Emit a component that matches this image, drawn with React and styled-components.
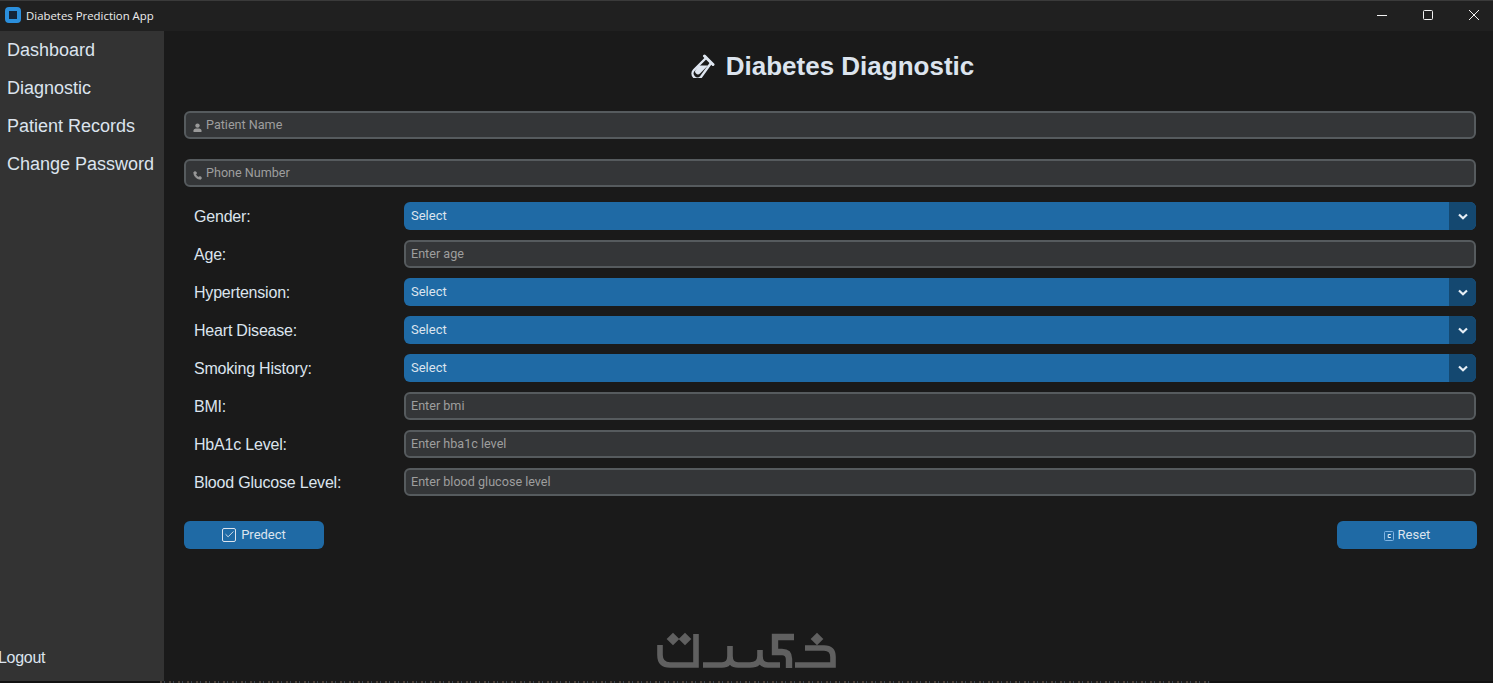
import React from 'react'
import styled, { createGlobalStyle } from 'styled-components'
import { Phone, Check } from 'lucide-react'

const GlobalStyle = createGlobalStyle`
	html, body {
		margin: 0;
		padding: 0;
		height: 100%;
		background: #1a1a1a;
		overflow: hidden;
	}
	* {
		box-sizing: border-box;
	}
`

const navItems = ['Dashboard', 'Diagnostic', 'Patient Records', 'Change Password']

const rows = [
	{ label: 'Gender:', type: 'select', text: 'Select' },
	{ label: 'Age:', type: 'input', text: 'Enter age' },
	{ label: 'Hypertension:', type: 'select', text: 'Select' },
	{ label: 'Heart Disease:', type: 'select', text: 'Select' },
	{ label: 'Smoking History:', type: 'select', text: 'Select' },
	{ label: 'BMI:', type: 'input', text: 'Enter bmi' },
	{ label: 'HbA1c Level:', type: 'input', text: 'Enter hba1c level' },
	{ label: 'Blood Glucose Level:', type: 'input', text: 'Enter blood glucose level' },
]

const App = () => {
	return (
		<Window>
			<GlobalStyle />
			<TitleBar>
				<AppIcon />
				<AppName>Diabetes Prediction App</AppName>
				<WindowControls>
					<svg width="14" height="14" viewBox="0 0 14 14">
						<path d="M2 7.5h10" stroke="#f2f2f2" strokeWidth="1" />
					</svg>
					<svg width="14" height="14" viewBox="0 0 14 14">
						<rect x="2.5" y="2.5" width="9" height="9" rx="1" fill="none" stroke="#f2f2f2" strokeWidth="1" />
					</svg>
					<svg width="14" height="14" viewBox="0 0 14 14">
						<path d="M2 2l10 10M12 2L2 12" stroke="#f2f2f2" strokeWidth="1" />
					</svg>
				</WindowControls>
			</TitleBar>
			<Body>
				<Sidebar>
					<Nav>
						{navItems.map((item) => (
							<NavItem key={item}>{item}</NavItem>
						))}
					</Nav>
					<Logout>Logout</Logout>
				</Sidebar>
				<Main>
					<Heading>
						<svg width="24" height="24" viewBox="0 0 24 24" fill="none">
							<path d="M13.5 2L22 10.5" stroke="#dfe6f0" strokeWidth="3" strokeLinecap="round" />
							<path d="M15 4L3 16a4.9 4.9 0 0 0 7 7L20 9" stroke="#dfe6f0" strokeWidth="2.4" />
							<path d="M7.5 11.5h9.5L9 19.5a2.6 2.6 0 0 1-4-4z" fill="#dfe6f0" />
						</svg>
						Diabetes Diagnostic
					</Heading>
					<TopField>
						<svg width="9" height="9" viewBox="0 0 9 9">
							<circle cx="4.5" cy="2.6" r="2.2" fill="#9a9a9a" />
							<path d="M0.5 9V7.4Q0.5 6 2.6 5.4h3.8Q8.5 6 8.5 7.4V9z" fill="#9a9a9a" />
						</svg>
						<span>Patient Name</span>
					</TopField>
					<TopField>
						<Phone size={9} fill="#9a9a9a" strokeWidth={2} />
						<span>Phone Number</span>
					</TopField>
					<Form>
						{rows.map((row) => (
							<Row key={row.label}>
								<Label>{row.label}</Label>
								{row.type === 'select' ? (
									<Select>
										<SelectText>{row.text}</SelectText>
										<Arrow>
											<svg width="10" height="7" viewBox="0 0 10 7">
												<path d="M1 1.5L5 5.2l4-3.7" fill="none" stroke="#e6eef5" strokeWidth="2.2" />
											</svg>
										</Arrow>
									</Select>
								) : (
									<Input>{row.text}</Input>
								)}
							</Row>
						))}
					</Form>
					<Actions>
						<Button>
							<CheckBox>
								<Check size={11} strokeWidth={2} />
							</CheckBox>
							Predect
						</Button>
						<Button>
							<ResetIcon viewBox="0 0 10 10">
								<rect x="0.5" y="0.5" width="9" height="9" rx="1" fill="none" stroke="#7fb5e4" />
								<path d="M6.8 3.5H4.2v3h2.6" fill="none" stroke="#e6eef5" />
							</ResetIcon>
							Reset
						</Button>
					</Actions>
				</Main>
			</Body>
			<BottomEdge>
				<EdgeNoise />
			</BottomEdge>
			<Watermark viewBox="0 0 190 50" fill="none">
				<g stroke="#606060" strokeWidth="5.6">
					<path d="M10 19V29Q10 39 20 39H46V8" />
					<path d="M53 39H72Q80 39 80 30V20M80 30Q80 39 88 39H100Q110 39 110 30V24M110 30Q110 39 118 39H130" />
					<path d="M144 11H125V26H132Q139 26 139 33V42" strokeWidth="6.4" />
					<path d="M145 39H183V31Q183 22 174 22H155" />
				</g>
				<g fill="#606060">
					<rect x="18.5" y="8.5" width="9" height="9" transform="rotate(45 23 13)" />
					<rect x="30.5" y="8.5" width="9" height="9" transform="rotate(45 35 13)" />
					<rect x="162.5" y="8.5" width="9" height="9" transform="rotate(45 167 13)" />
				</g>
			</Watermark>
		</Window>
	)
}

export default App

const Window = styled.div`
	position: relative;
	display: flex;
	flex-direction: column;
	width: 1493px;
	height: 683px;
	overflow: hidden;
	background: #1a1a1a;
	border-top: 1px solid #3a3a3a;
`
const TitleBar = styled.div`
	display: flex;
	align-items: center;
	flex: 0 0 30px;
	padding: 0 0 2px 5px;
	background: #202020;
`
const AppIcon = styled.div`
	width: 16px;
	height: 16px;
	border: 4px solid #2b8fdc;
	border-radius: 4px;
	background: #14253a;
`
const AppName = styled.div`
	margin-left: 5px;
	font-family: 'Open Sans', sans-serif;
	font-size: 11.4px;
	color: #ededed;
`
const WindowControls = styled.div`
	display: flex;
	align-items: center;
	gap: 32px;
	margin-left: auto;
	padding-right: 12px;
	svg {
		display: block;
	}
`
const Body = styled.div`
	display: flex;
	flex: 1;
	min-height: 0;
`
const Sidebar = styled.aside`
	display: flex;
	flex-direction: column;
	justify-content: space-between;
	width: 164px;
	padding: 0 0 11px;
	background: #333333;
	font-family: 'Liberation Sans', Arial, sans-serif;
	font-size: 18px;
	color: #dce4ee;
`
const Nav = styled.nav`
	display: flex;
	flex-direction: column;
`
const NavItem = styled.div`
	height: 38px;
	padding-left: 7px;
	line-height: 38px;
`
const Logout = styled.div`
	margin-left: -2px;
	font-size: 16px;
	letter-spacing: -0.3px;
	line-height: 24px;
`
const Main = styled.main`
	flex: 1;
	padding: 0 17px 0 20px;
	background: #1a1a1a;
	font-family: 'Roboto', sans-serif;
`
const Heading = styled.h1`
	display: flex;
	align-items: center;
	justify-content: center;
	gap: 11px;
	height: 70px;
	margin: 0 0 10px;
	padding-left: 5px;
	font-family: 'Liberation Sans', Arial, sans-serif;
	font-weight: 700;
	font-size: 26px;
	color: #dce4ee;
`
const fieldBase = `
	display: flex;
	align-items: center;
	height: 28px;
	padding-bottom: 2px;
	border: 2px solid #565b5e;
	border-radius: 6px;
	background: #343638;
	font-size: 12.6px;
	color: #9e9e9e;
`
const TopField = styled.div`
	${fieldBase}
	gap: 4px;
	margin-bottom: 20px;
	padding-left: 7px;
	&:nth-of-type(2) {
		margin-bottom: 15px;
	}
	svg {
		margin-top: 6px;
		color: #9a9a9a;
	}
`
const Form = styled.div`
	display: flex;
	flex-direction: column;
	gap: 10px;
`
const Row = styled.div`
	display: grid;
	grid-template-columns: 220px 1fr;
	align-items: center;
`
const Label = styled.div`
	padding: 2px 0 0 10px;
	font-family: 'Liberation Sans', Arial, sans-serif;
	font-size: 16px;
	letter-spacing: -0.2px;
	color: #dce4ee;
`
const Input = styled.div`
	${fieldBase}
	padding-left: 5px;
`
const Select = styled.div`
	display: flex;
	align-items: center;
	justify-content: space-between;
	height: 28px;
	padding-left: 7px;
	border-radius: 6px;
	overflow: hidden;
	background: #1f6aa5;
	font-size: 13px;
	color: #dce4ee;
`
const SelectText = styled.span`
	margin-bottom: 2px;
`
const Arrow = styled.div`
	display: flex;
	align-items: center;
	justify-content: center;
	width: 27px;
	height: 100%;
	background: #144870;
`
const Actions = styled.div`
	display: flex;
	justify-content: space-between;
	margin: 25px -1px 0 0;
`
const Button = styled.div`
	display: flex;
	align-items: center;
	justify-content: center;
	gap: 4px;
	width: 140px;
	height: 28px;
	padding-bottom: 2px;
	border-radius: 6px;
	background: #1f6aa5;
	font-size: 13px;
	color: #dce4ee;
`
const CheckBox = styled.div`
	display: flex;
	align-items: center;
	justify-content: center;
	width: 14px;
	height: 14px;
	margin: 1px 1px 0 0;
	border: 1.5px solid #dce4ee;
	border-radius: 2px;
`
const ResetIcon = styled.svg`
	width: 10px;
	height: 10px;
	margin-top: 4px;
`
const BottomEdge = styled.div`
	flex: 0 0 2px;
	padding-left: 160px;
	background: #111111;
`
const EdgeNoise = styled.div`
	width: 1050px;
	height: 100%;
	background: repeating-linear-gradient(90deg, #4a4038 0 2px, #1a1a1a 2px 4px, #3c4650 4px 5px, #1a1a1a 5px 9px);
`
const Watermark = styled.svg`
	position: absolute;
	left: 650px;
	top: 625px;
	width: 190px;
	height: 50px;
	overflow: visible;
`
